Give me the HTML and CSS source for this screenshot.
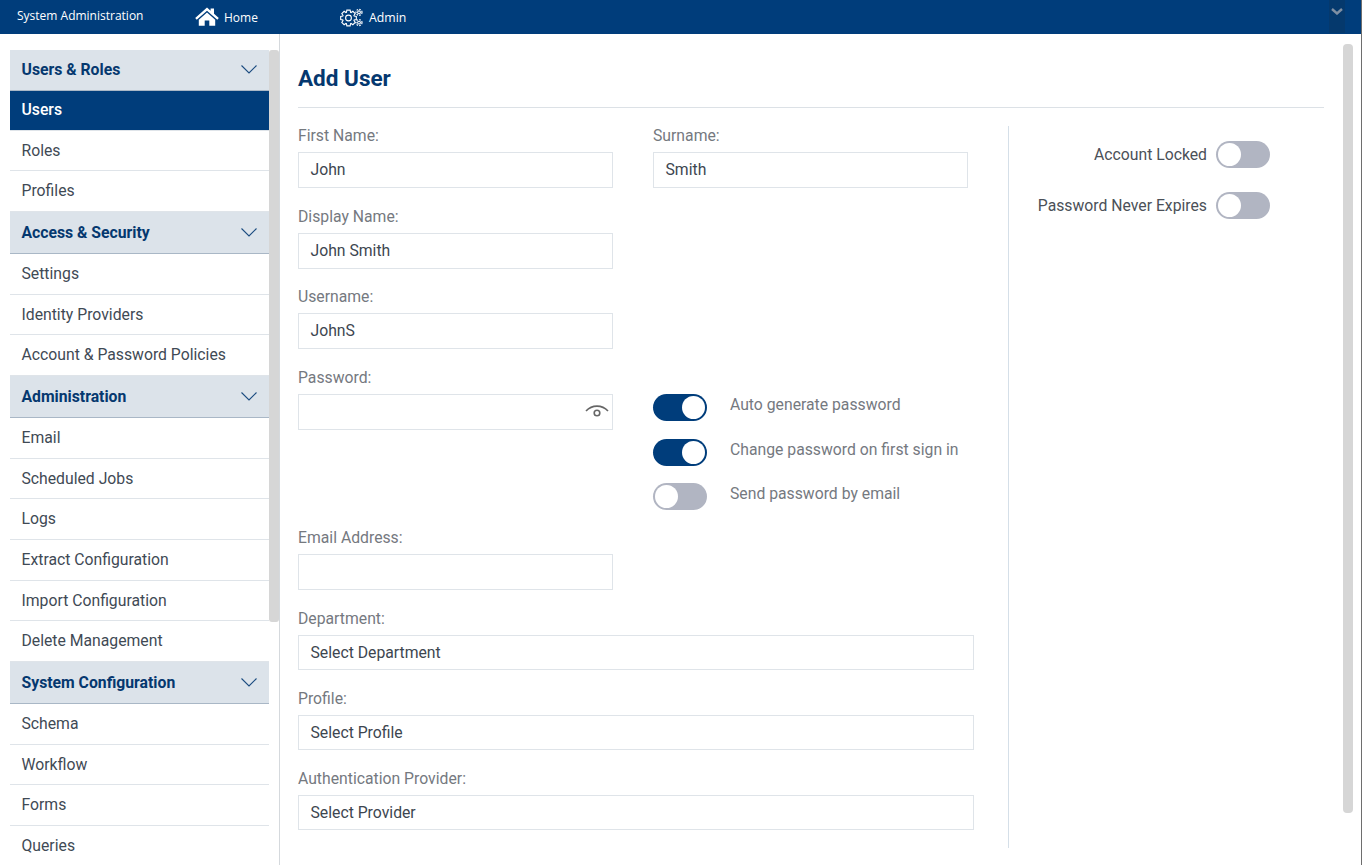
FILE: index.html
```html
<!DOCTYPE html>
<html lang="en">
<head>
<meta charset="utf-8">
<title>Add User</title>
<link rel="stylesheet" href="styles.css">
</head>
<body>
<header class="topbar">
  <span class="brand">System Administration</span>
  <a class="nav-link nav-home">
    <svg class="home-icon" viewBox="0 0 24 19" width="24" height="19"><path class="solid" d="M12 0.6 L15.6 3.8 V1.4 H19 V6.8 L23.8 11 L22.3 12.7 L12 3.7 L1.7 12.7 L0.2 11 Z"/><path class="solid" d="M12 5.6 L20.2 12.7 V18.8 H14.3 V13.6 H9.7 V18.8 H3.8 V12.7 Z"/></svg>
    Home
  </a>
  <a class="nav-link nav-admin">
    <svg class="admin-icon" viewBox="0 0 23 19" width="23" height="19">
      <g transform="translate(8.5 10)">
        <polygon class="line" points="5.64,-2.05 7.83,-1.66 7.83,1.66 5.64,2.05 5.44,2.54 6.71,4.36 4.36,6.71 2.54,5.44 2.05,5.64 1.66,7.83 -1.66,7.83 -2.05,5.64 -2.54,5.44 -4.36,6.71 -6.71,4.36 -5.44,2.54 -5.64,2.05 -7.83,1.66 -7.83,-1.66 -5.64,-2.05 -5.44,-2.54 -6.71,-4.36 -4.36,-6.71 -2.54,-5.44 -2.05,-5.64 -1.66,-7.83 1.66,-7.83 2.05,-5.64 2.54,-5.44 4.36,-6.71 6.71,-4.36 5.44,-2.54"/>
        <circle class="line" r="2.9"/>
      </g>
      <circle class="line" cx="19" cy="4.3" r="1.4"/>
      <circle class="dash" cx="19" cy="4.3" r="3"/>
      <circle class="line" cx="19" cy="14.6" r="1.4"/>
      <circle class="dash" cx="19" cy="14.6" r="3"/>
    </svg>
    Admin
  </a>
  <span class="collapse-btn">
    <svg viewBox="0 0 12 7" width="12" height="7"><path d="M1 1 L6 5.5 L11 1"/></svg>
  </span>
</header>

<div class="page">
  <aside class="sidebar">
    <nav class="menu">
      <div class="menu-head">Users &amp; Roles<svg class="chev" viewBox="0 0 16 9" width="16" height="9"><path d="M0.5 0.5 L8 8 L15.5 0.5"/></svg></div>
      <a class="menu-item active">Users</a>
      <a class="menu-item">Roles</a>
      <a class="menu-item">Profiles</a>
      <div class="menu-head">Access &amp; Security<svg class="chev" viewBox="0 0 16 9" width="16" height="9"><path d="M0.5 0.5 L8 8 L15.5 0.5"/></svg></div>
      <a class="menu-item">Settings</a>
      <a class="menu-item">Identity Providers</a>
      <a class="menu-item">Account &amp; Password Policies</a>
      <div class="menu-head">Administration<svg class="chev" viewBox="0 0 16 9" width="16" height="9"><path d="M0.5 0.5 L8 8 L15.5 0.5"/></svg></div>
      <a class="menu-item">Email</a>
      <a class="menu-item">Scheduled Jobs</a>
      <a class="menu-item">Logs</a>
      <a class="menu-item">Extract Configuration</a>
      <a class="menu-item">Import Configuration</a>
      <a class="menu-item">Delete Management</a>
      <div class="menu-head">System Configuration<svg class="chev" viewBox="0 0 16 9" width="16" height="9"><path d="M0.5 0.5 L8 8 L15.5 0.5"/></svg></div>
      <a class="menu-item">Schema</a>
      <a class="menu-item">Workflow</a>
      <a class="menu-item">Forms</a>
      <a class="menu-item">Queries</a>
    </nav>
    <div class="side-thumb"></div>
  </aside>

  <main class="content">
    <h1 class="title">Add User</h1>
    <div class="form-area">
      <section class="form-main">
        <div class="form-row">
          <div class="field"><label class="label">First Name:</label><div class="input">John</div></div>
          <div class="field"><label class="label">Surname:</label><div class="input">Smith</div></div>
        </div>
        <div class="form-row">
          <div class="field"><label class="label">Display Name:</label><div class="input">John Smith</div></div>
        </div>
        <div class="form-row">
          <div class="field"><label class="label">Username:</label><div class="input">JohnS</div></div>
        </div>
        <div class="form-row password-row">
          <div class="field"><label class="label">Password:</label>
            <div class="input input-eye">
              <svg class="eye" viewBox="0 0 24 13" width="24" height="13"><path d="M1 6 C7 -0.5 17 -0.5 23 6"/><circle cx="12" cy="8" r="2.8"/></svg>
            </div>
          </div>
          <div class="pw-options">
            <div class="pw-option"><span class="toggle on"></span><span class="pw-text">Auto generate password</span></div>
            <div class="pw-option"><span class="toggle on"></span><span class="pw-text">Change password on first sign in</span></div>
            <div class="pw-option"><span class="toggle"></span><span class="pw-text">Send password by email</span></div>
          </div>
        </div>
        <div class="form-row">
          <div class="field"><label class="label">Email Address:</label><div class="input"></div></div>
        </div>
        <div class="field field-wide"><label class="label">Department:</label><div class="input select">Select Department</div></div>
        <div class="field field-wide"><label class="label">Profile:</label><div class="input select">Select Profile</div></div>
        <div class="field field-wide"><label class="label">Authentication Provider:</label><div class="input select">Select Provider</div></div>
      </section>
      <section class="form-side">
        <div class="side-option"><span class="side-text">Account Locked</span><span class="toggle"></span></div>
        <div class="side-option"><span class="side-text">Password Never Expires</span><span class="toggle"></span></div>
      </section>
    </div>
    <div class="main-thumb"></div>
  </main>
</div>
</body>
</html>
```

FILE: styles.css
```css
* { box-sizing: border-box; }
html, body { margin: 0; height: 865px; overflow: hidden; background: #fff; }
body { font-family: Roboto, "Liberation Sans", sans-serif; font-size: 15.75px; color: #3d4650; border-right: 1px solid #6e6e6e; }

.topbar { display: flex; height: 34px; background: #003d7b; color: #fff; font-family: "Open Sans", "Liberation Sans", sans-serif; font-size: 12px; position: relative; }
.brand { width: 178px; margin-left: 17px; padding-top: 7px; line-height: 17px; }
.nav-link { display: flex; align-items: center; height: 34px; padding-top: 1px; gap: 5px; line-height: 34px; }
.nav-home { width: 145px; }
.nav-admin { gap: 6px; font-size: 12.3px; }
.nav-home .home-icon { margin-top: -2px; }
.home-icon .solid { fill: #fff; }
.admin-icon { margin-top: -1px; }
.admin-icon .line { fill: none; stroke: #fff; stroke-width: 1.1; }
.admin-icon .dash { fill: none; stroke: #fff; stroke-width: 1.2; stroke-dasharray: 1.6 1.2; }
.collapse-btn { position: absolute; right: 16px; top: 0; width: 16px; height: 33px; background: #05396d; display: flex; justify-content: center; padding-top: 8px; }
.collapse-btn svg { fill: none; stroke: #7f8fa3; stroke-width: 2.4; }

.page { display: flex; height: 831px; }

.sidebar { position: relative; width: 280px; padding: 16px 0 0 10px; border-right: 1px solid #d5d9dd; overflow: hidden; flex: none; }
.menu { width: 259px; display: flex; flex-direction: column; }
.menu-head { flex: none; display: flex; align-items: center; justify-content: space-between; height: 42px; padding: 0 12px 0 11.5px; background: #dce3ea; border-bottom: 1px solid #a9b7c6; color: #05386f; font-weight: 700; }
.menu-head:first-child { height: 41px; padding-bottom: 2px; }
.chev { fill: none; stroke: #1b4c80; stroke-width: 1.1; }
.menu-item { flex: none; display: flex; align-items: center; height: 40.67px; padding: 0 11.5px 0.4px; border-bottom: 1px solid #dfe4e9; color: #3f4a55; }
.menu-item.active { background: #003d7b; color: #fff; font-weight: 500; height: 39.67px; padding-bottom: 2px; }
.side-thumb { position: absolute; left: 269px; top: 16px; width: 10px; height: 572px; background: #d6d6d6; border-radius: 3px; }

.content { position: relative; flex: 1; padding: 0 37px 0 18px; display: flex; flex-direction: column; }
.title { margin: 0; height: 74px; padding-top: 30px; line-height: 28px; font-size: 22.5px; font-weight: 700; color: #05386f; border-bottom: 1px solid #dce1e6; }
.form-area { display: flex; margin-top: 18px; height: 722px; }
.form-main { width: 710px; padding-top: 1.4px; }
.form-row { display: flex; gap: 40px; }
.field { width: 315px; height: 80.38px; flex: none; }
.field-wide { width: 676px; }
.label { display: block; height: 18px; margin-bottom: 7px; line-height: 18.8px; color: #75797f; }
.input { position: relative; height: 36px; padding: 0 11.5px; line-height: 34.8px; border: 1px solid #dfe4e9; color: #3d4650; background: #fff; }
.select { height: 35px; line-height: 33px; }
.eye { position: absolute; right: 3px; top: 10px; fill: none; stroke: #666; stroke-width: 1.6; }

.password-row { height: 160.76px; }
.pw-options { padding-top: 25.3px; }
.pw-option { display: flex; align-items: center; height: 27px; margin-bottom: 17.7px; }
.pw-text { margin-left: 23px; margin-top: -5.6px; color: #75797f; }

.toggle { position: relative; flex: none; display: block; width: 54px; height: 27px; border-radius: 14px; background: #b1b5c2; }
.toggle::after { content: ""; position: absolute; left: 2px; top: 2px; width: 23px; height: 23px; border-radius: 50%; background: #fff; }
.toggle.on { background: #003d7b; }
.toggle.on::after { left: 29px; }

.form-side { flex: 1; border-left: 1px solid #d5dfe8; padding: 15px 54px 0 0; display: flex; flex-direction: column; gap: 24px; }
.side-option { display: flex; justify-content: flex-end; align-items: center; gap: 9px; }
.side-text { color: #4b5058; }
.main-thumb { position: absolute; right: 8px; top: 10px; width: 10px; height: 769px; background: #d6d6d6; border-radius: 4px; }
```
